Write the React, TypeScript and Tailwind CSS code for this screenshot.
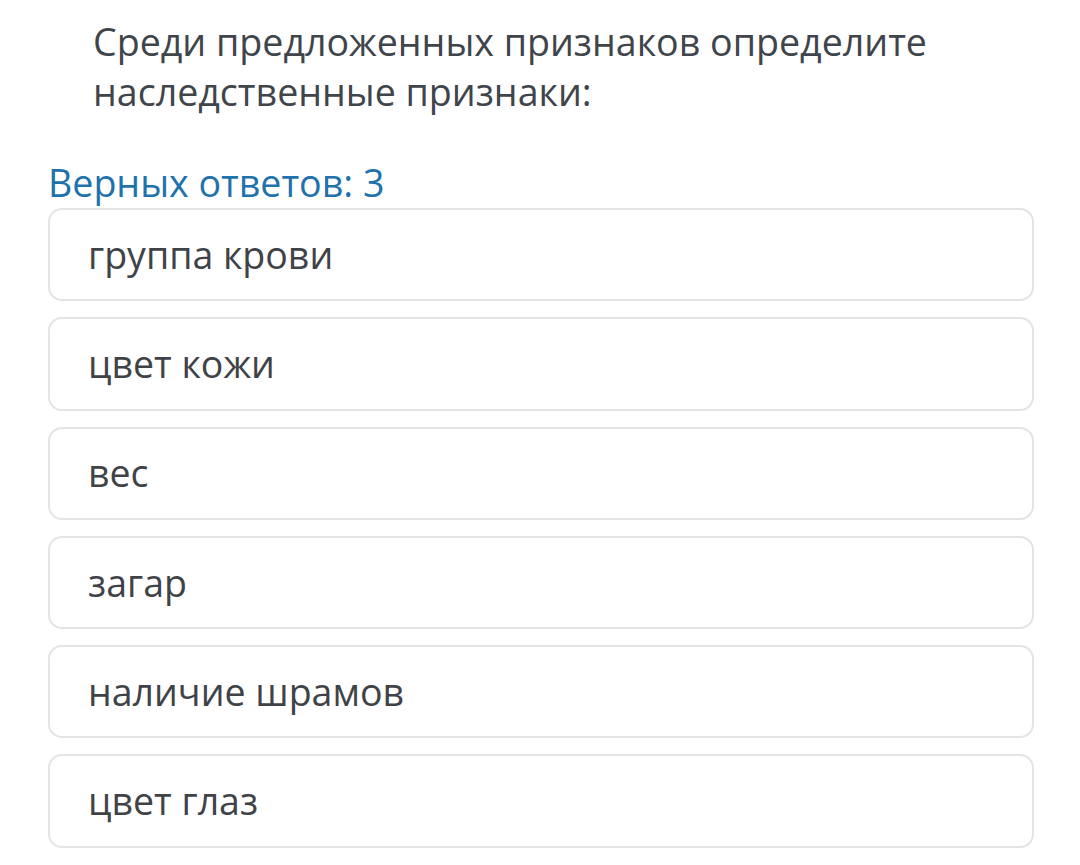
const options = [
  'группа крови',
  'цвет кожи',
  'вес',
  'загар',
  'наличие шрамов',
  'цвет глаз',
];

export default function App() {
  return (
    <div className="min-h-[865px] bg-white font-['Open_Sans',sans-serif]">
      <div className="pl-[93px] pr-[60px] pt-[17px]">
        <h1 className="text-[37.6px] leading-[50px] font-normal text-[#40454b]">
          Среди предложенных признаков определите наследственные признаки:
        </h1>
      </div>

      <div className="mr-[46px] ml-[48px] mt-[45px]">
        <p className="text-[37.6px] leading-[42px] text-[#1f72ab]">Верных ответов: 3</p>

        <div className="mt-[4px] flex flex-col gap-[16px]">
          {options.map((item) => (
            <div
              key={item}
              className="flex h-[93.3px] items-center rounded-[14px] border-2 border-[#e3e4e6] bg-white pl-[38px]"
            >
              <span className="text-[37.5px] leading-[48px] text-[#3f4348]">{item}</span>
            </div>
          ))}
        </div>
      </div>
    </div>
  );
}
